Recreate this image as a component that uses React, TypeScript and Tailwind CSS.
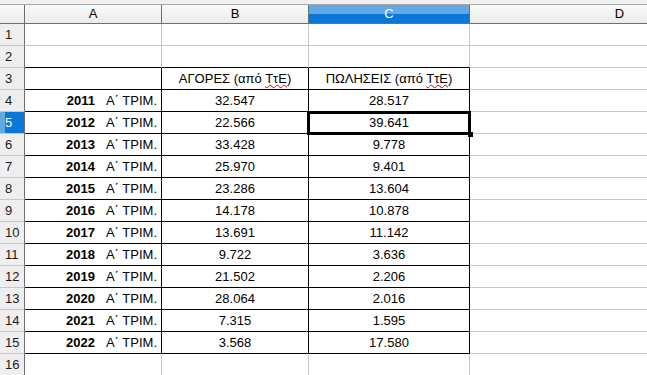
const years = [2011, 2012, 2013, 2014, 2015, 2016, 2017, 2018, 2019, 2020, 2021, 2022];
const buys = ['32.547', '22.566', '33.428', '25.970', '23.286', '14.178', '13.691', '9.722', '21.502', '28.064', '7.315', '3.568'];
const sells = ['28.517', '39.641', '9.778', '9.401', '13.604', '10.878', '11.142', '3.636', '2.206', '2.016', '1.595', '17.580'];

function RowHead({ n }: { n: number }) {
    const active = n === 5;
    return (
        <div
            className={
                active
                    ? 'w-[25px] shrink-0 border-r border-b border-r-[#6e6e6e] border-b-[#c6c6c6] bg-[linear-gradient(90deg,#62a8e5_22%,#0a78d7_22%)] text-white pl-[5px] pt-[1px] flex items-center'
                    : 'w-[25px] shrink-0 border-r border-b border-r-[#6e6e6e] border-b-[#c6c6c6] bg-[#efefef] text-[#1a1a1a] pl-[5px] pt-[1px] flex items-center'
            }
        >
            {n}
        </div>
    );
}

function Greek({ label }: { label: string }) {
    return (
        <span>
            {label} (από <span className="underline decoration-wavy decoration-[#e00000] decoration-1 underline-offset-[1px]">ΤτΕ</span>)
        </span>
    );
}

export default function App() {
    const rows = Array.from({ length: 16 }, (_, i) => i + 1);

    return (
        <div className="w-[647px] h-[375px] overflow-hidden bg-white font-['Liberation_Sans',Arial,sans-serif] text-[13px] text-black">
            <div className="h-[4px] bg-[#f0f0f0]" />

            {/* column headers */}
            <div className="flex h-[20px] border-t border-b border-t-[#a8a8a8] border-b-[#6e6e6e] bg-[linear-gradient(#fafafa,#ebebeb)]">
                <div className="w-[25px] shrink-0 border-r border-[#6e6e6e]" />
                <div className="w-[137px] shrink-0 border-r border-[#6e6e6e] flex items-center justify-center">A</div>
                <div className="w-[147px] shrink-0 border-r border-[#6e6e6e] flex items-center justify-center">B</div>
                <div className="w-[161px] shrink-0 border-r border-[#6e6e6e] flex items-center justify-center text-white bg-[linear-gradient(#62a8e5_48%,#0a78d7_48%)]">C</div>
                <div className="w-[300px] shrink-0 border-r border-[#6e6e6e] flex items-center justify-center">D</div>
            </div>

            {rows.map(n => {
                const inTable = n >= 3 && n <= 15;
                const topEdge = n === 2;
                const dataIdx = n - 4;
                const line = inTable ? 'border-r border-b border-black' : topEdge ? 'border-r border-b border-r-[#c6c6c6] border-b-black' : 'border-r border-b border-[#c6c6c6]';

                return (
                    <div key={n} className="flex h-[22px]">
                        <RowHead n={n} />
                        <div className={`w-[137px] shrink-0 flex items-center justify-end pr-[4px] pt-[1px] ${line}`}>
                            {dataIdx >= 0 && dataIdx < 12 && (
                                <>
                                    <span className="font-bold">{years[dataIdx]}</span>
                                    <span className="ml-[11px]">Α΄ ΤΡΙΜ.</span>
                                </>
                            )}
                        </div>
                        <div className={`w-[147px] shrink-0 flex items-center justify-center pt-[1px] ${line}`}>
                            {n === 3 && <Greek label="ΑΓΟΡΕΣ" />}
                            {dataIdx >= 0 && dataIdx < 12 && buys[dataIdx]}
                        </div>
                        <div className={`relative w-[161px] shrink-0 flex items-center justify-center pt-[1px] ${line}`}>
                            {n === 3 && <Greek label="ΠΩΛΗΣΕΙΣ" />}
                            {dataIdx >= 0 && dataIdx < 12 && sells[dataIdx]}
                            {n === 5 && (
                                <>
                                    <div className="absolute -left-[2px] -top-[1px] right-[-2px] bottom-[-2px] border-[3px] border-black" />
                                    <div className="absolute right-[-4px] bottom-[-4px] w-[5px] h-[5px] bg-black" />
                                </>
                            )}
                        </div>
                        <div className="w-[300px] shrink-0 border-r border-b border-[#c6c6c6]" />
                    </div>
                );
            })}
        </div>
    );
}
